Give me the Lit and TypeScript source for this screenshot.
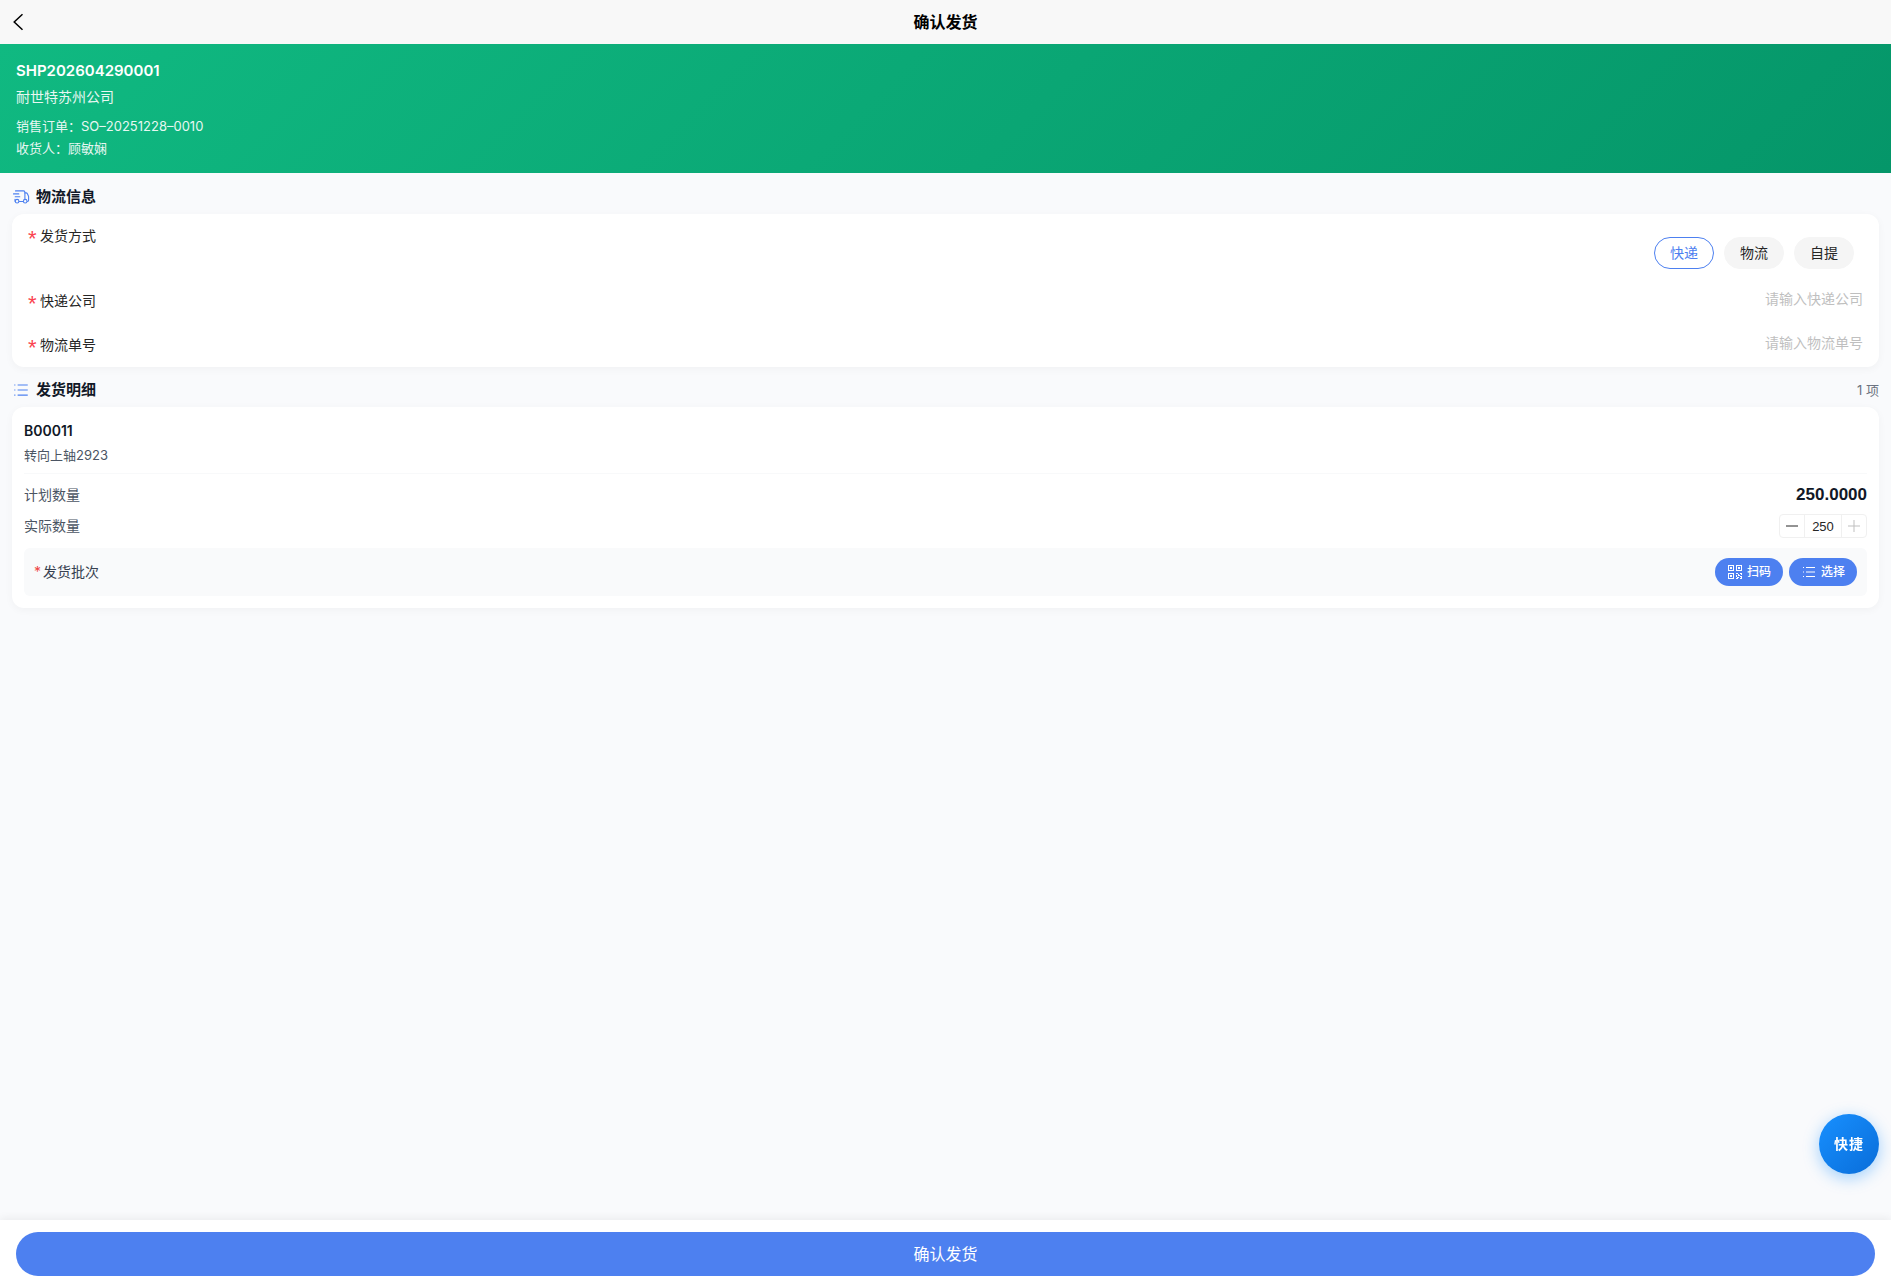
import { LitElement, html, css, svg } from "lit";
import { customElement, state } from "lit/decorators.js";

const listIcon = html`<svg class="icon" viewBox="0 0 16 16" aria-hidden="true">
  <path d="M2 3.5h1M2 8h1M2 12.5h1M5 3.5h9M5 8h9M5 12.5h9" fill="none" stroke="currentColor" stroke-width="1" />
</svg>`;

const truckIcon = html`<svg class="icon" viewBox="0 0 18 18" aria-hidden="true">
  <g fill="none" stroke="currentColor" stroke-width="1.1" stroke-linecap="round" stroke-linejoin="round">
    <path d="M3.5 2.9h8a1.4 1.4 0 0 1 1.4 1.4v6.4M7.2 13.5h3.9" />
    <path d="M1.5 5.9h5.3M3.2 8.8h4.6M3 11.2v2" />
    <path d="M12.9 4.9h1.2c.6 0 1 .3 1.3.8l1 2.2c.1.3.2.6.2.9v3.4c0 .7-.4 1.2-1.2 1.3" />
    <circle cx="5.1" cy="13.2" r="1.8" />
    <circle cx="13.2" cy="13.2" r="1.8" />
  </g>
</svg>`;

const finder = (x: number, y: number) => svg`
  <rect x=${x + 0.5} y=${y + 0.5} width="5" height="5" fill="none" stroke="currentColor" />
  <rect x=${x + 2} y=${y + 2} width="2" height="2" fill="currentColor" />`;

const qrIcon = html`<svg class="icon" viewBox="0 0 16 16" aria-hidden="true">
  ${finder(1, 1)}${finder(9, 1)}${finder(1, 9)}
  <path d="M9 9h2v1H9zM13 9h2v2h-1v-1h-1zM11 10h1v1h1v1h-2zM9 11h1v2H9zM13 12h2v1h-2zM10 13h2v1h-1v1h-1zM13 14h1v-1h1v2h-2zM9 14h1v1H9z" fill="currentColor" />
</svg>`;

@customElement("app-root")
export class AppRoot extends LitElement {
  static styles = css`
    :host {
      display: block;
      font-family: Inter, "Noto Sans CJK SC", sans-serif;
      font-size: 14px;
      line-height: 20px;
      color: #111827;
    }
    * { box-sizing: border-box; }
    h1, h2, h3, p, dl, dd, dt { margin: 0; padding: 0; font-weight: inherit; }
    button, input { font: inherit; color: inherit; margin: 0; padding: 0; border: 0; background: none; }
    button { cursor: pointer; display: inline-flex; align-items: center; justify-content: center; }
    .icon { display: block; width: 16px; height: 16px; flex: none; }
    .page { display: flex; flex-direction: column; min-height: 100vh; background: #f9fafc; }
    .nav {
      display: grid;
      grid-template-columns: 44px 1fr 44px;
      height: 44px;
      background: #f8f8f8;
      align-items: center;
    }
    .nav h1 { text-align: center; font-size: 16px; font-weight: 700; color: #000; }
    .back { height: 44px; justify-content: flex-start; padding-left: 12px; color: #000; }
    .back svg { width: 12px; height: 18px; }
    .hero { padding: 16px; background: linear-gradient(135deg, #10b981 0%, #059669 100%); color: #fff; }
    .code { font-size: 15px; line-height: 22px; font-weight: 600; }
    .company { margin-top: 5px; opacity: 0.9; }
    .meta { margin-top: 10px; display: grid; gap: 4px; font-size: 13px; line-height: 18px; opacity: 0.9; }
    .meta div { display: flex; }
    main { flex: 1; padding: 1px 12px 24px; }
    .head { display: flex; align-items: center; gap: 6px; padding: 12px 0 6px; line-height: 22px; color: #4d80f0; }
    .head .icon { width: 18px; height: 18px; }
    .head h2 { flex: 1; font-size: 15px; font-weight: 700; color: #111827; }
    .count { font-size: 13px; color: #6b7280; }
    .card { background: #fff; border-radius: 12px; box-shadow: 0 2px 8px rgba(0, 0, 0, 0.04); }
    .row { display: flex; justify-content: space-between; padding: 10px 16px; color: #262626; }
    .label { display: flex; height: 24px; line-height: 24px; }
    .label::before {
      content: "*"; width: 12px; font: 22px/30px "Liberation Sans", sans-serif; color: #fa4350;
    }
    .pills { display: flex; gap: 10px; padding: 13px 9px 0 0; }
    .pill { position: relative; }
    .pill input { position: absolute; inset: 0; opacity: 0; }
    .pill span {
      display: block; min-width: 60px; padding: 5px 15px; border: 1px solid #f5f5f5; border-radius: 16px;
      background: #f5f5f5; text-align: center;
    }
    .pill input:checked + span { border-color: #4d80f0; background: #fff; color: #4d80f0; }
    .row > input { flex: 1; height: 20px; text-align: right; outline: none; }
    .row > input::placeholder { color: #bfbfbf; opacity: 1; }
    .item { padding: 12px; }
    .title { display: grid; gap: 2px; padding-bottom: 8px; border-bottom: 1px solid #f8f9fa; }
    .title h3 { font-size: 14px; line-height: 24px; font-weight: 600; }
    .title p { font-size: 13px; color: #4b5563; }
    .qty { display: grid; gap: 8px; padding: 10px 0; color: #4b5563; }
    .line { display: flex; justify-content: space-between; align-items: center; line-height: 22px; }
    .plan { font-family: "Liberation Sans", sans-serif; font-size: 17px; font-weight: 700; color: #111827; }
    .stepper { display: flex; height: 24px; border: 1px solid #f0f0f0; border-radius: 4px; color: #262626; }
    .stepper button { width: 24px; }
    .stepper button:disabled { color: #bfbfbf; cursor: default; }
    .stepper svg { width: 12px; height: 12px; }
    .stepper input {
      width: 38px; text-align: center; font: 13px "Liberation Sans", sans-serif; outline: none;
      border-left: 1px solid #f0f0f0; border-right: 1px solid #f0f0f0;
    }
    .batch { display: flex; align-items: center; justify-content: space-between; padding: 10px; border-radius: 6px; background: #f9fafb; color: #374151; }
    .batch .name::before { content: "*"; color: #ef4444; margin-right: 2px; }
    .tools { display: flex; gap: 6px; }
    .tools button { height: 28px; padding: 0 12px; gap: 4px; border-radius: 14px; background: #4d80f0; color: #fff; font-size: 12px; font-weight: 500; }
    footer { padding: 12px 16px; background: #fff; box-shadow: 0 -2px 8px rgba(0, 0, 0, 0.06); }
    .submit { width: 100%; height: 44px; border-radius: 22px; background: #4d80f0; color: #fff; font-size: 16px; }
    .quick {
      position: fixed; right: 12px; bottom: 114px; width: 60px; height: 60px; border-radius: 50%;
      background: linear-gradient(135deg, #1890ff, #096dd9); box-shadow: 0 4px 16px rgba(24, 144, 255, 0.4);
      color: #fff; font-size: 14px; font-weight: 700; letter-spacing: 1px;
    }
  `;

  @state() private method = "快递";
  @state() private count = 250;
  private readonly planned = 250;

  private field(id: string, label: string) {
    return html`<div class="row">
      <label class="label" for=${id}>${label}</label>
      <input id=${id} type="text" placeholder=${"请输入" + label} />
    </div>`;
  }

  render() {
    return html`<div class="page">
      <header class="nav">
        <button class="back" aria-label="返回">
          <svg viewBox="0 0 12 18" aria-hidden="true"><path d="M10.5 1.2 2.2 9l8.3 7.8" fill="none" stroke="currentColor" stroke-width="1.5" /></svg>
        </button>
        <h1>确认发货</h1>
      </header>
      <section class="hero">
        <p class="code">SHP202604290001</p>
        <p class="company">耐世特苏州公司</p>
        <dl class="meta">
          <div><dt>销售订单：</dt><dd>SO–20251228–0010</dd></div>
          <div><dt>收货人：</dt><dd>顾敏娴</dd></div>
        </dl>
      </section>
      <main>
        <div class="head">${truckIcon}<h2>物流信息</h2></div>
        <section class="card">
          <div class="row" role="radiogroup" aria-labelledby="method">
            <span class="label" id="method">发货方式</span>
            <div class="pills">
              ${["快递", "物流", "自提"].map((m) => html`<label class="pill">
                <input type="radio" name="method" .checked=${m === this.method} @change=${() => (this.method = m)} />
                <span>${m}</span>
              </label>`)}
            </div>
          </div>
          ${this.field("company", "快递公司")}
          ${this.field("tracking", "物流单号")}
        </section>
        <div class="head">${listIcon}<h2>发货明细</h2><span class="count">1 项</span></div>
        <section class="card item">
          <div class="title"><h3>B00011</h3><p>转向上轴2923</p></div>
          <div class="qty">
            <div class="line"><span>计划数量</span><span class="plan">250.0000</span></div>
            <div class="line">
              <label for="actual">实际数量</label>
              <div class="stepper">
                <button aria-label="减少" @click=${() => (this.count = Math.max(0, this.count - 1))}>
                  <svg viewBox="0 0 12 12" aria-hidden="true"><path d="M0 6h12" stroke="currentColor" /></svg>
                </button>
                <input id="actual" type="text" inputmode="numeric" .value=${String(this.count)} />
                <button aria-label="增加" ?disabled=${this.count >= this.planned} @click=${() => this.count++}>
                  <svg viewBox="0 0 12 12" aria-hidden="true"><path d="M0 6h12M6 0v12" stroke="currentColor" /></svg>
                </button>
              </div>
            </div>
          </div>
          <div class="batch">
            <span class="name">发货批次</span>
            <div class="tools"><button>${qrIcon}扫码</button><button>${listIcon}选择</button></div>
          </div>
        </section>
      </main>
      <footer><button class="submit">确认发货</button></footer>
      <button class="quick">快捷</button>
    </div>`;
  }
}
